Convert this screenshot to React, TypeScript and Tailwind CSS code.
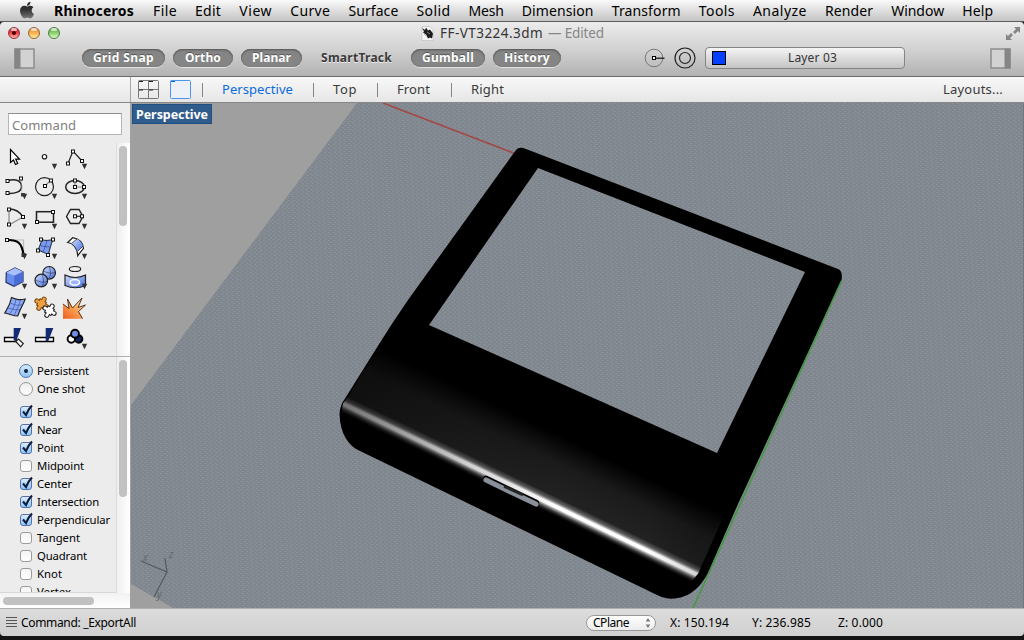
import { useLayoutEffect, useRef } from "react";
import type { ReactNode } from "react";
import { FaApple } from "react-icons/fa";

/** One-line label whose tracking is adjusted so that it fills `w` pixels. */
function Label({ w, children, className = "" }: { w: number; children: string; className?: string }) {
  const ref = useRef<HTMLSpanElement>(null);
  useLayoutEffect(() => {
    const el = ref.current;
    if (!el) return;
    el.style.letterSpacing = "0px";
    const natural = el.getBoundingClientRect().width;
    el.style.letterSpacing = `${(w - natural) / children.length}px`;
  }, [w, children]);
  return (
    <span ref={ref} className={`inline-block shrink-0 whitespace-pre ${className}`}>
      {children}
    </span>
  );
}

const menus: [string, number][] = [
  ["File", 24], ["Edit", 26], ["View", 33], ["Curve", 40], ["Surface", 50], ["Solid", 34],
  ["Mesh", 35], ["Dimension", 72], ["Transform", 69], ["Tools", 36], ["Analyze", 54],
  ["Render", 48], ["Window", 53], ["Help", 31],
];

function MenuBar() {
  return (
    <div className="flex h-[22px] shrink-0 items-center border-b border-[#5c5c5c] bg-linear-to-b from-[#fafafa] to-[#c4c4c4] pl-[18px] text-[14px] leading-none text-black">
      <svg width="18" height="21" viewBox="0 0 18 21" className="mr-[18px]">
        <defs>
          <linearGradient id="apple" x1="0" y1="0" x2="0" y2="1">
            <stop offset="0" stopColor="#222" />
            <stop offset="0.5" stopColor="#333" />
            <stop offset="1" stopColor="#777" />
          </linearGradient>
        </defs>
        <FaApple x="-0.500" y="0.500" size={19} fill="url(#apple)" />
      </svg>
      <Label w={80} className="font-bold">Rhinoceros</Label>
      <div className="ml-[19px] flex gap-[18.1px]">
        {menus.map(([t, w]) => <Label key={t} w={w}>{t}</Label>)}
      </div>
    </div>
  );
}

function Pill({ w, tw, children, className = "" }: { w: number; tw: number; children: string; className?: string }) {
  return (
    <div
      style={{ width: w }}
      className={`flex h-[18px] shrink-0 items-center justify-center rounded-full bg-[#858585] shadow-[inset_0_1px_2px_#555,inset_0_0_1px_#666,0_1px_0_#e2e2e2] ${className}`}
    >
      <Label w={tw} className="text-[12px] leading-none font-bold text-white [text-shadow:0_-1px_0_#555]">{children}</Label>
    </div>
  );
}

function Light({ kind }: { kind: "red" | "amber" | "green" }) {
  const c = {
    red: "border-[#8e3434] bg-linear-to-b from-[#b22b34] via-[#f03c48] to-[#ffb0b0]",
    amber: "border-[#946030] bg-linear-to-b from-[#dc8b36] via-[#f8b04e] to-[#fff0a0]",
    green: "border-[#4d7a40] bg-linear-to-b from-[#5ea648] via-[#8cd070] to-[#d8ffc0]",
  }[kind];
  return (
    <div className={`relative flex h-3 w-3 items-center justify-center rounded-full border ${c}`}>
      <div className="absolute top-0 left-[2px] h-[3px] w-[6px] rounded-full bg-white/65" />
      {kind === "red" && <div className="h-[4px] w-[4px] rounded-full bg-[#4a0000]" />}
    </div>
  );
}

function TitleBar() {
  return (
    <div className="flex h-[55px] shrink-0 flex-col rounded-t-[4px] border-b border-[#6a6a6a] bg-linear-to-b from-[#ececec] via-[#d2d2d2] to-[#b2b2b2] text-[#3c3c3c]">
      <div className="flex h-[22px] items-center pl-2">
        <div className="flex gap-2"><Light kind="red" /><Light kind="amber" /><Light kind="green" /></div>
        <svg width="13" height="15" viewBox="0 0 13 15" className="ml-[361px]">
          <path d="M1 .5h8l3 3v11H1z" fill="#f5f5f5" stroke="#bbb" strokeWidth=".6" />
          <path d="M1 2l3 2 1-2.500 2 3 2-1 3 4-1 5-2-1-2 1-2-4-3-2 1-1z" fill="#1c1c1c" />
          <path d="M3 8l3 2M6 6l3 2" stroke="#999" strokeWidth=".8" />
        </svg>
        <Label w={103} className="ml-[6px] pt-[2px] text-[13.5px] leading-none text-[#333]">FF-VT3224.3dm</Label>
        <Label w={56} className="ml-[5px] pt-[2px] text-[13.5px] leading-none text-[#868686]">— Edited</Label>
        <svg width="15" height="15" viewBox="0 0 15 15" className="ml-[402px]" fill="#858585">
          <path d="M8 1h6v6l-2-2-3 3-2-2 3-3zM0 8l2 2 3-3 2 2-3 3 2 2H0z" />
        </svg>
      </div>
      <div className="flex h-[28px] items-center pl-[14px]">
        <svg width="21" height="21" viewBox="0 0 21 21">
          <rect x="1" y="1" width="19" height="19" fill="#d2d2d2" stroke="#8d8d8d" strokeWidth="1.5" />
          <rect x="0.500" y="0.500" width="6" height="20" fill="#858585" />
        </svg>
        <Pill w={83} tw={61} className="ml-[47px]">Grid Snap</Pill>
        <Pill w={60} tw={36} className="ml-2">Ortho</Pill>
        <Pill w={61} tw={39} className="ml-2">Planar</Pill>
        <Label w={71} className="ml-[19px] text-[12px] leading-none font-bold text-[#3a3a3a] [text-shadow:0_1px_0_#eee]">SmartTrack</Label>
        <Pill w={74} tw={52} className="ml-[19px]">Gumball</Pill>
        <Pill w={68} tw={46} className="ml-2">History</Pill>
        <svg width="56" height="24" viewBox="0 0 56 24" className="ml-[82px]" fill="none">
          <circle cx="11" cy="12" r="8.800" stroke="#777" />
          <path d="M11 12.200h10.500" stroke="#111" strokeWidth="1.200" />
          <rect x="9.500" y="10.500" width="3" height="3" fill="#fff" stroke="#000" />
          <circle cx="42" cy="12" r="10" stroke="#222" strokeWidth="1.200" />
          <circle cx="42" cy="12" r="5.500" stroke="#222" strokeWidth="1.200" />
        </svg>
        <div className="ml-[6px] flex h-[22px] w-[200px] shrink-0 items-center rounded-[4px] border border-[#858585] bg-linear-to-b from-[#f5f5f5] to-[#c4c4c4] pl-[6px]">
          <div className="h-[14px] w-[14px] border border-black bg-[#0540ff]" />
          <Label w={49} className="ml-[62px] text-[12px] leading-none text-[#333]">Layer 03</Label>
        </div>
        <svg width="21" height="21" viewBox="0 0 21 21" className="ml-[85px]">
          <rect x="1" y="1" width="19" height="19" fill="#d2d2d2" stroke="#8d8d8d" strokeWidth="1.500" />
          <rect x="14.500" y="0.500" width="6" height="20" fill="#858585" />
        </svg>
      </div>
    </div>
  );
}

function ViewTabs() {
  const sep = "h-[14px] w-px shrink-0 bg-[#858585]";
  return (
    <div className="flex h-[26px] shrink-0 items-center border-b border-[#878787] bg-linear-to-b from-[#f8f8f8] to-[#e6e6e6] pr-[1px] text-[13px] leading-none text-[#3a3a3a]">
      <div className="h-full w-[131px] shrink-0 border-r border-[#a5a5a5]" />
      <svg width="21" height="20" viewBox="0 0 21 20" className="ml-[7px]" fill="none">
        <rect x=".5" y=".5" width="20" height="18" rx="1" stroke="#777" />
        <path d="M10.500 0v19M0 9.500h21" stroke="#777" />
        <path d="M1 1.500h4M11 1.500h4M1 10h4M11 10h4" stroke="#222" strokeWidth="1" />
      </svg>
      <svg width="21" height="20" viewBox="0 0 21 20" className="ml-[11px]" fill="none">
        <rect x=".5" y=".5" width="20" height="18" rx="1" fill="#edf1f7" stroke="#4b95ea" />
        <path d="M1 1.500h4" stroke="#0863cf" strokeWidth="1" />
      </svg>
      <div className={`ml-[11px] ${sep}`} />
      <Label w={71} className="ml-[19px] text-[#0b6bdc]">Perspective</Label>
      <div className={`ml-[20px] ${sep}`} />
      <Label w={24} className="ml-[19px]">Top</Label>
      <div className={`ml-[20px] ${sep}`} />
      <Label w={33} className="ml-[19px]">Front</Label>
      <div className={`ml-[21px] ${sep}`} />
      <Label w={33} className="ml-[19px]">Right</Label>
      <Label w={60} className="mr-[20px] ml-auto">Layouts...</Label>
    </div>
  );
}

/** Small square control point. */
function P({ x, y }: { x: number; y: number }) {
  return <rect x={x - 1.5} y={y - 1.5} width="3" height="3" fill="#fff" stroke="#111" strokeWidth="1" />;
}

function Tool({ children, menu = true }: { children: ReactNode; menu?: boolean }) {
  return (
    <svg width="30" height="30" viewBox="0 0 30 30" fill="none" stroke="#222" strokeWidth="1.200">
      {children}
      {menu && <path d="M21.800 21.700h5.400l-2.700 5.500z" fill="#333" stroke="none" />}
    </svg>
  );
}

/** Jigsaw piece: four knobs round a square core. */
function Piece({ x, y, fill, line }: { x: number; y: number; fill: string; line: string }) {
  const knobs = [[0, -5.3], [5.3, 0], [0, 5.3], [-5.3, 0]];
  return (
    <g transform={`translate(${x} ${y}) rotate(30)`}>
      {knobs.map(([cx, cy]) => <circle key={`${cx}${cy}`} cx={cx} cy={cy} r="2" fill={fill} stroke={line} strokeWidth="1.100" />)}
      <rect x="-3.600" y="-3.600" width="7.200" height="7.200" fill={fill} stroke={line} strokeWidth="1.100" />
      <path d="M0-6V6M-6 0H6" stroke={fill} strokeWidth="2.600" />
    </g>
  );
}

function Toolbox() {
  return (
    <div className="grid w-[90px] grid-cols-3 content-start">
      <Tool menu={false}>
        <path d="M10.500 7.500v13l3-2.500 2 4.500 2.200-1-2-4.300h3.800z" fill="#fff" stroke="#000" />
      </Tool>
      <Tool><circle cx="14.500" cy="14.700" r="2.200" fill="#fff" /></Tool>
      <Tool><path d="M8 21.500L13 9l9 10" /><P x={8} y={21.5} /><P x={13} y={9.500} /><P x={22} y={19} /></Tool>

      <Tool>
        <path d="M7.500 9C14 6.500 21 8 21.500 14s-7 8-14 7.500" strokeWidth="1.500" /><path d="M21 6.500l1 16" stroke="#aaa" strokeWidth=".5" />
        <P x={7.5} y={9} /><P x={7.500} y={21} /><P x={21} y={6.500} /><rect x="21" y="21" width="4" height="3.500" fill="#444" stroke="none" />
      </Tool>
      <Tool><circle cx="14.500" cy="14.700" r="9" /><path d="M15 14l6-6" stroke="#888" /><P x={15} y={14} /><P x={21} y={8.500} /></Tool>
      <Tool><ellipse cx="15" cy="15" rx="9.300" ry="6.400" strokeWidth="1.500" /><path d="M15 8.500V15h9" stroke="#888" /><P x={15} y={15} /><P x={15} y={8.500} /><P x={24} y={15} /></Tool>

      <Tool><path d="M9 7v16L23 15" stroke="#888" /><path d="M9 7c7 0 11 3 14 8" strokeWidth="1.500" /><P x={9} y={7.500} /><P x={23} y={15} /><P x={9} y={22.500} /></Tool>
      <Tool><rect x="6.500" y="9.700" width="17" height="10.500" strokeWidth="1.500" /><P x={7} y={20} /><P x={23} y={10} /></Tool>
      <Tool><path d="M6.500 14.500l4-7h8.500l4 7-4 7h-8.500z" strokeWidth="1.400" /><path d="M15 14.300h7" /><P x={15} y={14.300} /><P x={22} y={14.300} /></Tool>

      <Tool><path d="M8 8h15.500v14" stroke="#bbb" /><path d="M8 8c10 0 14 3 15.500 15" strokeWidth="2.200" stroke="#000" /><P x={7} y={8} /><rect x="21.500" y="21" width="4" height="4" fill="#333" stroke="none" /></Tool>
      <Tool>
        <path d="M11.500 7.500c4 1.500 7 1 11.500 0-2 5-3.500 10-4.500 15-4-1.500-6-3-11-4.500 2-3 3.500-6 4-10.500z" fill="#7b9bf0" strokeWidth="1" />
        <path d="M9.500 13c4 2 7 1.500 11.500 2M17 8.500c-1 4-2 8-4.500 12" stroke="#3a519a" strokeWidth=".8" />
        <P x={11} y={7.500} /><P x={23} y={7.500} /><P x={8} y={18.500} /><P x={18} y={23} />
      </Tool>
      <Tool>
        <path d="M7.700 10.500L12.700 5.700C19 7 23 11 23.500 16.300L17.700 23.700C17.500 16 13 11 7.700 10.500z" fill="#fff" />
        <path d="M11.500 11.500L17 7c3 1.500 5 4 6 7l-5.500 6c-1-4-3-7-6-8.500z" fill="url(#blue)" stroke="none" />
        <path d="M11.500 11.500L17 7M17.500 19.500l5.500-5.500" stroke="#334" strokeWidth=".8" />
      </Tool>

      <Tool>
        <path d="M6.300 10.500L15 6l8 3.800v9.800L14 24.300l-8-4z" fill="#6a8df0" stroke="#24325c" />
        <path d="M6.300 10.500L15 6l8 3.800-8.700 4z" fill="#a8c0ff" stroke="none" /><path d="M14.300 13.800l8.700-4v9.800L14 24.300z" fill="#4a6cd4" stroke="none" />
      </Tool>
      <Tool>
        <circle cx="19.200" cy="10.800" r="6.300" fill="url(#blue)" /><path d="M13.500 9c4 2 8 3 12 1M19 4.500c2 4 2 8 0 12" strokeWidth=".5" />
        <circle cx="11.300" cy="18.500" r="6.300" fill="url(#blue)" /><path d="M5.500 18c4 2 8 3 12 1M12 13c2 4 2 8 0 11.500" strokeWidth=".5" />
      </Tool>
      <Tool>
        <ellipse cx="15" cy="7" rx="5.700" ry="2.500" fill="#eee" />
        <path d="M5 13q10 5 20.500 0v10.500q-10 4.500-20.500 0z" fill="url(#blue)" />
        <ellipse cx="14.800" cy="20.300" rx="4.800" ry="2.800" fill="#9bb4ff" stroke="#fff" strokeWidth="1.500" />
      </Tool>

      <Tool>
        <path d="M11.500 5.500c5 2 8 3 13.700 1.500-2 6-4.500 8-7.500 17-4 0-8-2-13-3 3-5 5.500-8 6.800-15.500z" fill="#8faaf4" />
        <path d="M10.500 11c4 2 8 3 12 1.500M8 16c5 1 8 2.500 12 1.500M16 7.500c-1 5-3 10-6 14M20.500 8c-1 5-4 9-6 15" stroke="#3f5db0" strokeWidth=".8" />
      </Tool>
      <Tool menu={false}>
        <Piece x={11.5} y={11.7} fill="#f0a040" line="#7d4c14" />
        <Piece x={19.5} y={18.7} fill="#fff" line="#222" />
      </Tool>
      <Tool menu={false}>
        <path d="M3 12L9 16.500 7.500 7 12.500 16 22 6 18 15.500 25.500 13 18.500 19.500 22.500 26.700H3z" fill="url(#fire)" stroke="none" />
        <path d="M3 12L9 16.500 7.500 7 12.500 16 22 6 18 15.500 25.500 13 18.500 19.500 22.500 26.700" stroke="#43210c" strokeWidth=".9" />
      </Tool>

      <Tool menu={false}>
        <path d="M4.500 15.500h11.500v4H4.500z" fill="#fff" stroke="#000" strokeWidth="1.300" /><path d="M13.700 6H21l-4.500 12.500h-2.800z" fill="#142a75" stroke="none" />
        <path d="M15.800 19.500l2.700-2.500 4.800 4.500-2.600 3.300z" fill="#f4f4f4" stroke="#222" />
      </Tool>
      <Tool menu={false}><path d="M5.500 15.500h18v4h-18z" fill="#fff" stroke="#000" strokeWidth="1.300" /><path d="M15.700 6h7.600l-5 13h-2.600z" fill="#142a75" stroke="none" /></Tool>
      <Tool>
        <circle cx="11.300" cy="17" r="3.700" fill="#fff" stroke="#000" strokeWidth="1.900" />
        <circle cx="18.700" cy="17" r="3.700" fill="#10235e" stroke="#000" strokeWidth="1.900" />
        <circle cx="15" cy="11.700" r="3.900" fill="#718fe8" stroke="#000" strokeWidth="1.900" />
      </Tool>
    </div>
  );
}

const snaps: [string, boolean, number][] = [
  ["End", true, 19], ["Near", true, 25], ["Point", true, 27], ["Midpoint", false, 47], ["Center", true, 35],
  ["Intersection", true, 62], ["Perpendicular", true, 73], ["Tangent", false, 43], ["Quadrant", false, 50],
  ["Knot", false, 25], ["Vertex", false, 34],
];

function Radio({ on, w, children }: { on: boolean; w: number; children: string }) {
  return (
    <div className="flex h-[18px] shrink-0 items-center pl-[19px]">
      <div className={`flex h-[14px] w-[14px] items-center justify-center rounded-full border ${on ? "border-[#4b76a8] bg-linear-to-b from-[#d9eafa] to-[#8cc4f5]" : "border-[#969696] bg-linear-to-b from-[#ededed] to-white"}`}>
        {on && <div className="h-[4px] w-[4px] rounded-full bg-[#10203c]" />}
      </div>
      <Label w={w} className="ml-1">{children}</Label>
    </div>
  );
}

function Snap({ on, w, children }: { on: boolean; w: number; children: string }) {
  return (
    <div className="flex h-[18px] shrink-0 items-center pl-5">
      <div className={`relative h-[12px] w-[12px] rounded-[3px] border ${on ? "border-[#5470a6] bg-linear-to-b from-[#dcecfb] to-[#88c5fa]" : "border-[#9a9a9a] bg-linear-to-b from-[#f3f3f3] to-white"}`}>
        {on && (
          <svg width="14" height="14" viewBox="0 0 14 14" className="absolute -top-[3px] -left-[1px]" fill="none">
            <path d="M3 7.500l3 3.500Q8 5.500 12 1.500" stroke="#0d1c38" strokeWidth="2.100" />
          </svg>
        )}
      </div>
      <Label w={w} className="ml-[5px]">{children}</Label>
    </div>
  );
}

const track = "w-[14px] shrink-0 border-l border-[#dcdcdc] bg-linear-to-r from-[#efefef] to-white pl-[2px]";

function Sidebar() {
  return (
    <div className="flex w-[131px] shrink-0 flex-col border-r border-[#a0a0a0] bg-[#ececec] text-[11.300px] leading-none text-black">
      <div className="flex h-[39px] shrink-0 items-start pt-[10px] pl-2">
        <div className="flex h-[22px] w-[114px] items-center border border-[#b5b5b5] border-t-[#8e8e8e] bg-white pt-[2px] pl-[3px]">
          <Label w={64} className="text-[13px] text-[#808080]">Command</Label>
        </div>
      </div>
      <div className="flex h-[215px] shrink-0 justify-between border-b border-[#aeb1ac]">
        <Toolbox />
        <div className={`mt-[1px] pt-[3px] ${track}`}><div className="h-[80px] w-[8px] rounded-full bg-[#c1c1c1]" /></div>
      </div>
      <div className="flex h-[236px] shrink-0">
        <div className="flex h-full w-[116px] shrink-0 flex-col overflow-hidden border-b border-[#d8d8d8] pt-[5px]">
          <Radio on w={52}>Persistent</Radio>
          <Radio on={false} w={48}>One shot</Radio>
          <div className="h-[5px] shrink-0" />
          {snaps.map(([t, on, w]) => <Snap key={t} on={on} w={w}>{t}</Snap>)}
        </div>
        <div className={`pt-[3px] ${track}`}><div className="h-[137px] w-[8px] rounded-full bg-[#c1c1c1]" /></div>
      </div>
      <div className="flex-1 bg-linear-to-b from-[#f2f2f2] to-white pt-[4px] pl-[3px]">
        <div className="h-[8px] w-[91px] rounded-full bg-[#c1c1c1]" />
      </div>
    </div>
  );
}

const body =
  "M516 150Q519 146 526 149L838 269Q843 271 841.500 280L738 504 708 573C700 588 688 600 668 598.500Q662 598 656 594.500L359 450.500C349 446 340 434 339.500 414Q340 405 345 398.500L376 349Q392 323 408 300Z";
const screen = "M538 168L805 272 717 453 429 325Z";

function Viewport() {
  return (
    <div className="relative min-w-0 flex-1 border-r border-[#777] bg-[#9f9f9f]">
      <svg width="892" height="505" viewBox="131 103 892 505" className="block">
        <defs>
          <linearGradient id="blue" x1="0" y1="0" x2="1" y2="1"><stop offset="0" stopColor="#cfddff" /><stop offset="1" stopColor="#456ee0" /></linearGradient>
          <linearGradient id="fire" x1="1" y1="0" x2="0" y2="1"><stop offset="0.200" stopColor="#ffe2c0" /><stop offset="0.450" stopColor="#fba95a" /><stop offset="1" stopColor="#ee5a1c" /></linearGradient>
          <pattern id="grid" width="5" height="4" patternUnits="userSpaceOnUse" patternTransform="rotate(-3)">
            <rect width="5" height="4" fill="#80868e" />
            <path d="M0 1h2v1H0zM2 3h2v1H2z" fill="#8f959c" />
          </pattern>
          <linearGradient id="front" gradientUnits="userSpaceOnUse" x1="521" y1="490" x2="549.600" y2="430.600">
            <stop offset="0" stopColor="#242424" /><stop offset="0.600" stopColor="#1b1b1b" /><stop offset="0.800" stopColor="#0e0e0e" /><stop offset="1" stopColor="#000" />
          </linearGradient>
          <linearGradient id="shade" gradientUnits="userSpaceOnUse" x1="345" y1="0" x2="700" y2="0">
            <stop offset="0" stopColor="#000" stopOpacity=".55" /><stop offset="0.350" stopColor="#000" stopOpacity=".18" />
            <stop offset="0.600" stopColor="#000" stopOpacity="0" /><stop offset="0.850" stopColor="#000" stopOpacity="0" /><stop offset="1" stopColor="#000" stopOpacity=".18" />
          </linearGradient>
          <linearGradient id="sheen" gradientUnits="userSpaceOnUse" x1="525.100" y1="481.500" x2="516.900" y2="498.500">
            <stop offset="0" stopColor="#999" stopOpacity="0" /><stop offset="0.250" stopColor="#aaa" stopOpacity=".45" />
            <stop offset="0.420" stopColor="#fff" /><stop offset="0.560" stopColor="#fff" /><stop offset="0.750" stopColor="#777" stopOpacity=".65" /><stop offset="1" stopColor="#000" stopOpacity="0" />
          </linearGradient>
          <clipPath id="face"><path d="M343 404L376 351 440 330 735 490 698.500 573 692 581 660 590 341 419Z" /></clipPath>
        </defs>
        <path d="M357 103H1023V608H173L131 584V405Z" fill="url(#grid)" />
        <path d="M383 103L516 154" stroke="#a34747" strokeWidth="1.600" />
        <path d={`${body}${screen}`} fillRule="evenodd" fill="#000" />
        <path d="M841.500 281L693 608" stroke="#439a43" strokeWidth="1.600" />
        <g clipPath="url(#face)">
          <path d="M344 405L378 343 728 512 697 575Z" fill="url(#front)" />
          <path d="M340 404L702 578" stroke="url(#sheen)" strokeWidth="19" />
          <path d="M340 340H735V600H340Z" fill="url(#shade)" />
        </g>
        <path d="M486 479L536 503" stroke="#000" strokeWidth="6.500" strokeLinecap="round" />
        <path d="M486 480L536 504" stroke="#89909a" strokeWidth="5.200" strokeLinecap="round" />
        <path d="M504 486.500L523 495" stroke="#252525" strokeWidth="2.600" />
        <g stroke="#555a5e" fill="none" strokeWidth="1.200"><path d="M141 561l26 11-2-14M167 572l-13 25" /></g>
        <g fill="#65696d" fontFamily="Noto Sans, sans-serif" fontSize="10" fontStyle="italic">
          <text x="143" y="561">x</text><text x="169" y="558">z</text><text x="157" y="598">y</text>
        </g>
      </svg>
      <div className="absolute top-[1px] left-[1px] flex h-5 w-20 items-center border border-[#1e4f83] bg-[#305c8c] pt-[2px] pl-[3px]">
        <Label w={72} className="text-[12.500px] leading-none font-bold text-white">Perspective</Label>
      </div>
    </div>
  );
}

function StatusBar() {
  return (
    <div className="flex h-[28px] shrink-0 items-center rounded-b-[4px] border-t border-[#b0b0b0] bg-linear-to-b from-[#dcdcdc] to-[#d0d0d0] pl-[6px] text-[12px] leading-none text-black">
      <svg width="11" height="11" viewBox="0 0 11 11"><path d="M0 .5h11M0 3.500h11M0 6.500h11M0 9.500h11" stroke="#555" /></svg>
      <Label w={115} className="ml-[4px]">Command: _ExportAll</Label>
      <div className="ml-[450px] flex h-[16px] w-[70px] shrink-0 items-center rounded-full border border-[#999] bg-linear-to-b from-white to-[#ececec] pl-[6px]">
        <Label w={36}>CPlane</Label>
        <svg width="6" height="10" viewBox="0 0 6 10" className="ml-[16px]" fill="#777"><path d="M3 0l2.300 3.500H.7zM3 10L.7 6.500h4.600z" /></svg>
      </div>
      <Label w={59} className="ml-[14px]">X: 150.194</Label>
      <Label w={59} className="ml-[23px]">Y: 236.985</Label>
      <Label w={45} className="ml-[27px]">Z: 0.000</Label>
    </div>
  );
}

export default function App() {
  return (
    <div className="flex h-[640px] w-[1024px] flex-col overflow-hidden bg-[#151515] font-['Noto_Sans',sans-serif]">
      <MenuBar />
      <TitleBar />
      <ViewTabs />
      <div className="flex h-[505px] shrink-0">
        <Sidebar />
        <Viewport />
      </div>
      <StatusBar />
    </div>
  );
}
